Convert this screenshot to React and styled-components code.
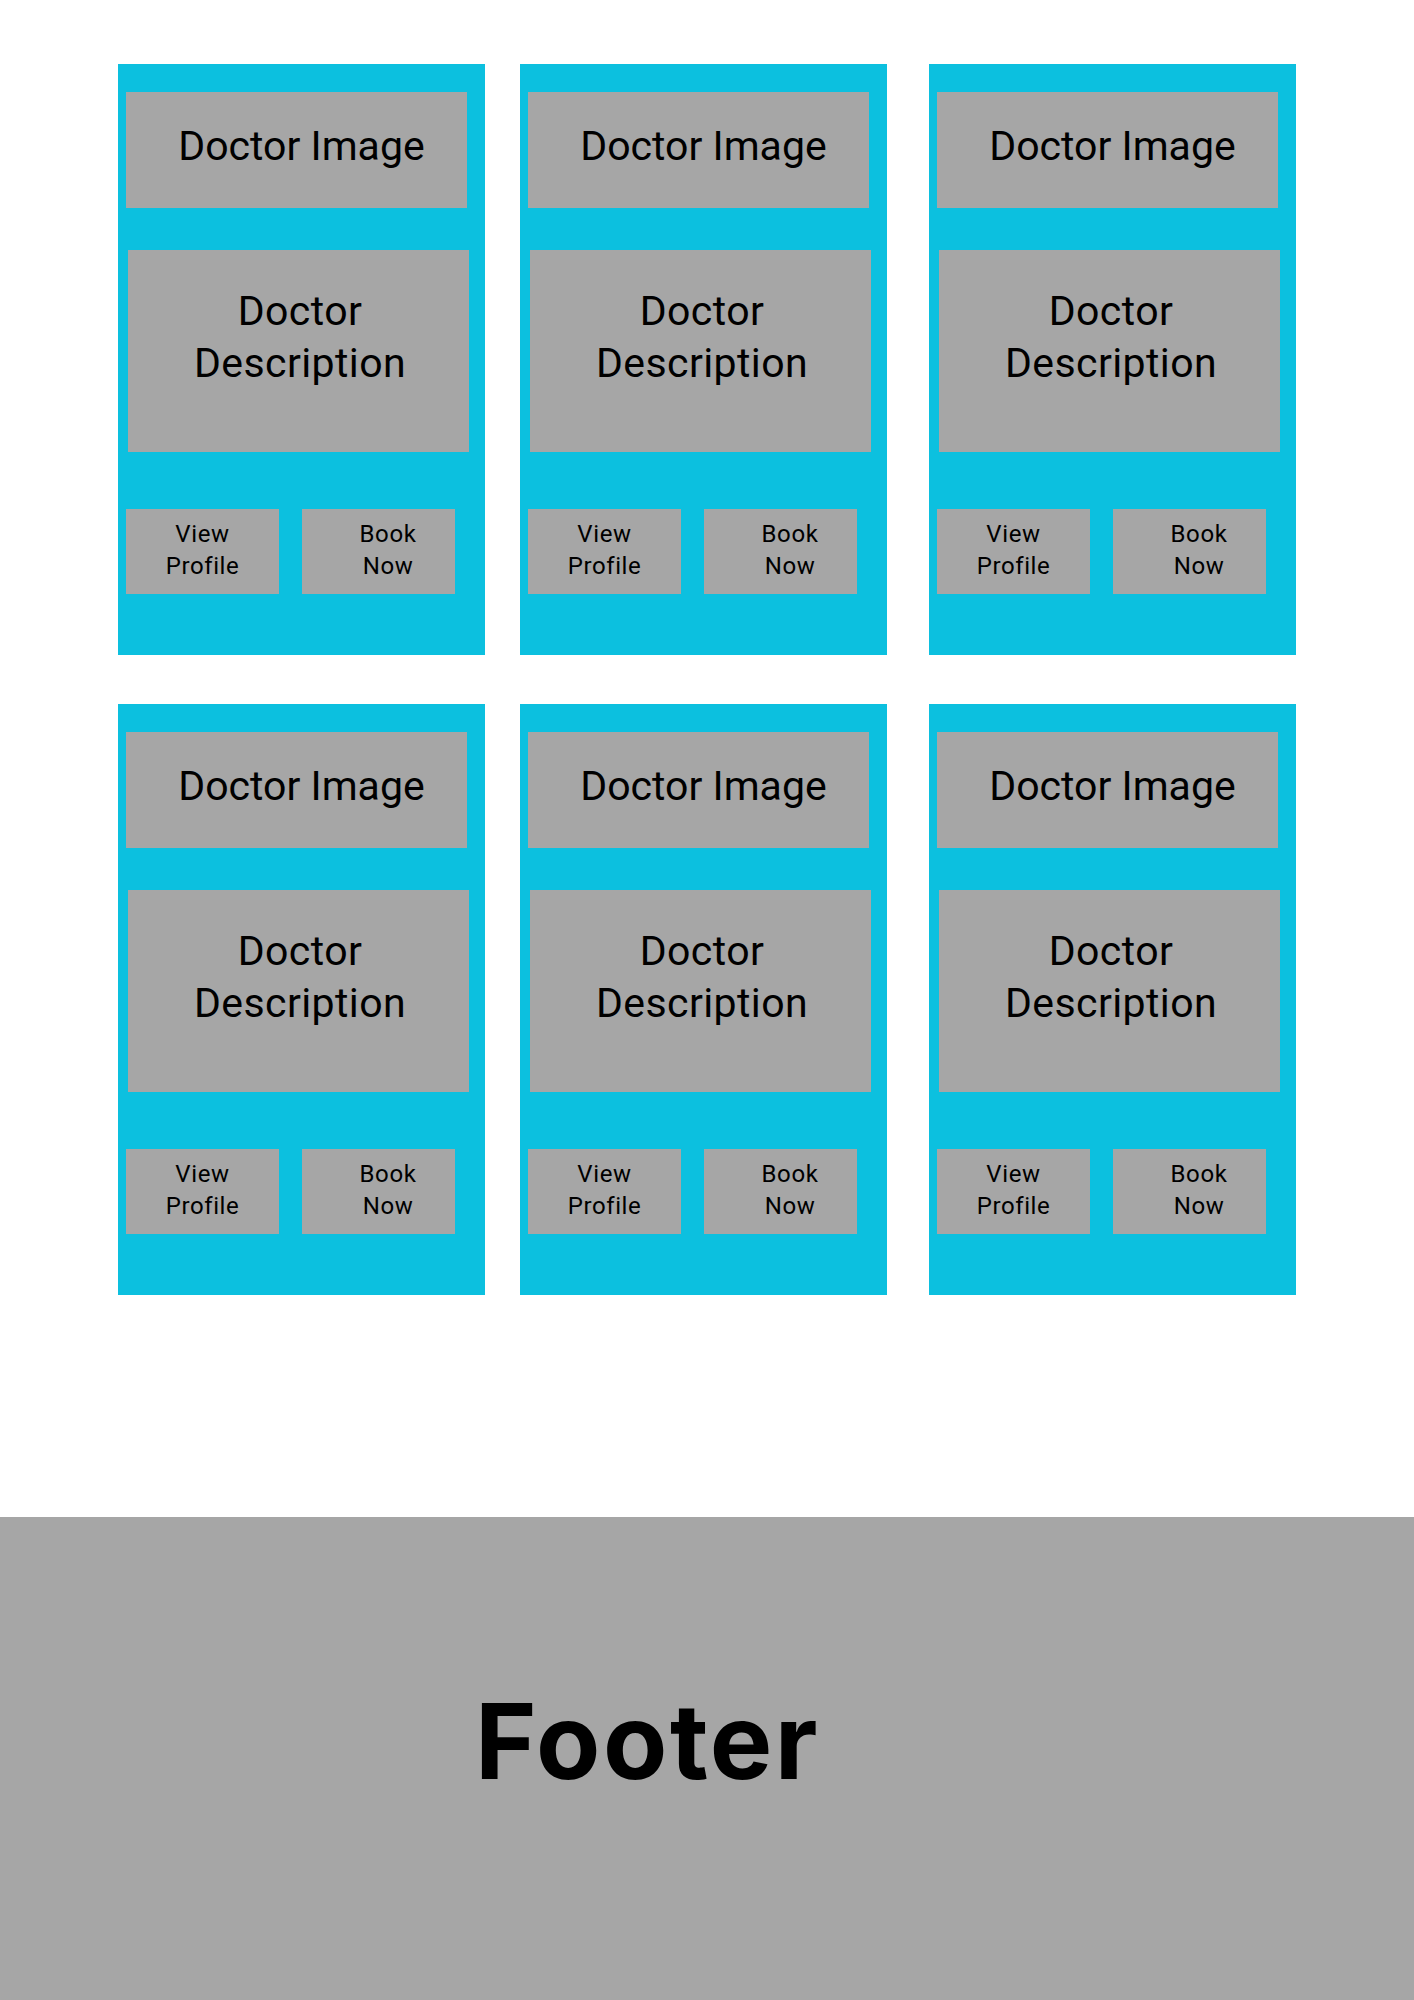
import styled, { createGlobalStyle } from "styled-components";

const GlobalStyle = createGlobalStyle`
  body {
    margin: 0;
    background: #ffffff;
    font-family: Roboto, "Liberation Sans", sans-serif;
  }
`;

const Page = styled.div`
  width: 100%;
  display: flex;
  flex-direction: column;
`;

const Grid = styled.div`
  display: flex;
  flex-direction: column;
  gap: 49px;
  padding: 64px 0 0 118px;
`;

const Row = styled.div`
  display: flex;
`;

const Card = styled.div`
  width: 367px;
  height: 591px;
  margin-left: ${({ $gap }) => $gap}px;
  background-color: #0cc0df;
  display: flex;
  flex-direction: column;
  padding-top: 28px;
  box-sizing: border-box;
`;

const ImageBox = styled.div`
  width: 341px;
  height: 116px;
  margin-left: 8px;
  background-color: #a6a6a6;
  box-sizing: border-box;
  padding: 28px 0 0 10px;
  text-align: center;
  font-size: 41px;
  line-height: 52px;
  color: #000;
`;

const DescBox = styled.div`
  width: 341px;
  height: 202px;
  margin: 42px 0 0 10px;
  background-color: #a6a6a6;
  box-sizing: border-box;
  padding: 35px 0 0 3px;
  text-align: center;
  font-size: 41px;
  line-height: 52px;
  letter-spacing: 0.4px;
  color: #000;
`;

const Actions = styled.div`
  display: flex;
  gap: 23px;
  margin: 57px 0 0 8px;
`;

const Button = styled.div`
  width: 153px;
  height: 85px;
  background-color: #a6a6a6;
  box-sizing: border-box;
  padding: 9px 0 0 ${({ $shift }) => $shift || 0}px;
  text-align: center;
  font-size: 24px;
  line-height: 32px;
  letter-spacing: 0.6px;
  color: #000;
`;

const Footer = styled.footer`
  margin-top: 222px;
  height: 483px;
  background-color: #a6a6a6;
  box-sizing: border-box;
  padding: 171px 0 0 475px;
`;

const FooterText = styled.h2`
  margin: 0;
  font-family: Inter, "Liberation Sans", sans-serif;
  font-weight: 700;
  font-size: 105px;
  line-height: 1;
  letter-spacing: 2.5px;
  color: #000;
`;

const gaps = [0, 35, 42];

function DoctorCard({ gap }) {
  return (
    <Card $gap={gap}>
      <ImageBox>Doctor Image</ImageBox>
      <DescBox>
        Doctor
        <br />
        Description
      </DescBox>
      <Actions>
        <Button>
          View
          <br />
          Profile
        </Button>
        <Button $shift={19}>
          Book
          <br />
          Now
        </Button>
      </Actions>
    </Card>
  );
}

function App() {
  return (
    <Page>
      <GlobalStyle />
      <Grid>
        {[0, 1].map((r) => (
          <Row key={r}>
            {gaps.map((g, i) => (
              <DoctorCard key={i} gap={g} />
            ))}
          </Row>
        ))}
      </Grid>
      <Footer>
        <FooterText>Footer</FooterText>
      </Footer>
    </Page>
  );
}

export default App;
